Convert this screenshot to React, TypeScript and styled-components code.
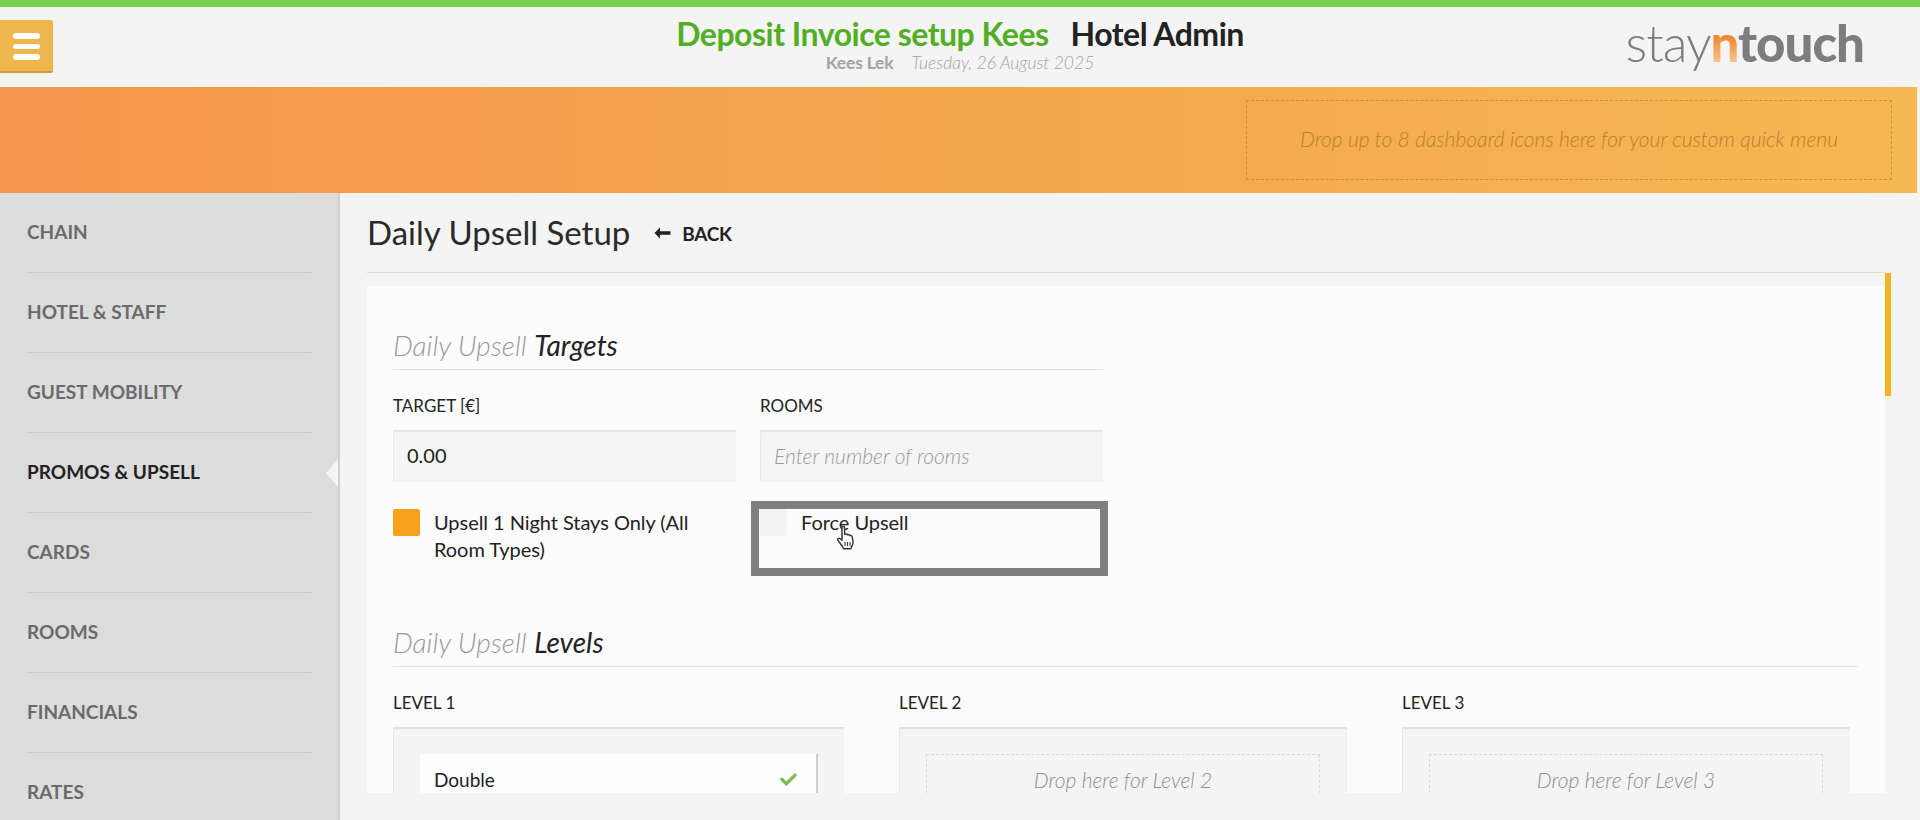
import { type FC } from 'react';
import styled, { createGlobalStyle } from 'styled-components';
import { FaCheck } from 'react-icons/fa';

const GlobalStyle = createGlobalStyle`
  html, body {
    margin: 0;
    padding: 0;
    height: 820px;
    overflow: hidden;
    background: #f4f4f4;
    font-family: Lato, "Open Sans", sans-serif;
    color: #222;
  }
  * { box-sizing: border-box; }
`;

const menuItems = ['CHAIN', 'HOTEL & STAFF', 'GUEST MOBILITY', 'PROMOS & UPSELL', 'CARDS', 'ROOMS', 'FINANCIALS', 'RATES'];

const App: FC = () => {
  return (
    <Page>
      <GlobalStyle />
      <Header>
        <MenuButton aria-label="menu">
          <MenuBar />
          <MenuBar />
          <MenuBar />
        </MenuButton>
        <HeaderCenter>
          <HeaderTitle>
            <GreenTitle>Deposit Invoice setup Kees</GreenTitle>
            <span>Hotel Admin</span>
          </HeaderTitle>
          <HeaderSub>
            <UserName>Kees Lek</UserName>
            <DateText>Tuesday, 26 August 2025</DateText>
          </HeaderSub>
        </HeaderCenter>
        <Logo>
          <LogoLight>stay</LogoLight>
          <LogoN>n</LogoN>
          <LogoBold>touch</LogoBold>
        </Logo>
      </Header>

      <Band>
        <DropArea>Drop up to 8 dashboard icons here for your custom quick menu</DropArea>
      </Band>

      <Body>
        <Sidebar>
          {menuItems.map((item) => (
            <MenuRow key={item} $active={item === 'PROMOS & UPSELL'}>
              {item}
            </MenuRow>
          ))}
        </Sidebar>

        <Main>
          <TitleRow>
            <PageTitle>Daily Upsell Setup</PageTitle>
            <BackLink>
              <svg width="17" height="12" viewBox="0 0 17 12">
                <path d="M6 0.500 L0.500 6 L6 11.500 L6 7.800 L16.500 7.800 L16.500 4.200 L6 4.200 Z" fill="#222" />
              </svg>
              BACK
            </BackLink>
          </TitleRow>

          <CardWrap>
            <ScrollThumb />
            <Card>
              <TargetsBlock>
                <SectionTitle>
                  <em>Daily Upsell</em> <b>Targets</b>
                </SectionTitle>
                <FieldGrid>
                  <div>
                    <FieldLabel>TARGET [€]</FieldLabel>
                    <FieldInput>0.00</FieldInput>
                  </div>
                  <div>
                    <FieldLabel>ROOMS</FieldLabel>
                    <FieldInput $placeholder>Enter number of rooms</FieldInput>
                  </div>
                  <CheckRow>
                    <CheckBox $checked />
                    <CheckLabel>Upsell 1 Night Stays Only (All Room Types)</CheckLabel>
                  </CheckRow>
                  <CheckRow>
                    <CheckBox />
                    <CheckLabel>Force Upsell</CheckLabel>
                    <Highlight />
                    <HandCursor width="22" height="26" viewBox="0 0 22 26">
                      <path
                        d="M7 2.5c0-1.6 2.6-1.6 2.6 0v7l1-.4c1-.3 1.8.1 2.1.8.9-.4 1.9-.1 2.2.7.9-.3 2 .1 2.2 1.1l1 5c.4 2-.5 3.6-1.6 5l-.6 2H8.500l-.8-2L3 15.500c-1-1.300.5-3 2-2l2 1.700z"
                        fill="#fff"
                        stroke="#3a3a3a"
                        strokeWidth="1.500"
                        strokeLinejoin="round"
                      />
                      <path d="M10 17v4M12.500 17v4M15 17v4" stroke="#3a3a3a" strokeWidth="1.100" />
                    </HandCursor>
                  </CheckRow>
                </FieldGrid>
              </TargetsBlock>

              <LevelsBlock>
                <SectionTitle>
                  <em>Daily Upsell</em> <b>Levels</b>
                </SectionTitle>
                <LevelGrid>
                  <div>
                    <FieldLabel>LEVEL 1</FieldLabel>
                    <LevelBox>
                      <RoomItem>
                        Double
                        <FaCheck size={17} color="#7cbb4f" />
                      </RoomItem>
                    </LevelBox>
                  </div>
                  <div>
                    <FieldLabel>LEVEL 2</FieldLabel>
                    <LevelBox>
                      <DropZone>Drop here for Level 2</DropZone>
                    </LevelBox>
                  </div>
                  <div>
                    <FieldLabel>LEVEL 3</FieldLabel>
                    <LevelBox>
                      <DropZone>Drop here for Level 3</DropZone>
                    </LevelBox>
                  </div>
                </LevelGrid>
              </LevelsBlock>
            </Card>
          </CardWrap>
        </Main>
      </Body>
    </Page>
  );
};

export default App;

const Page = styled.div`
  width: 1920px;
  height: 820px;
  display: flex;
  flex-direction: column;
  overflow: hidden;
  border-top: 7px solid #7ad150;
`;

const Header = styled.header`
  height: 80px;
  flex: none;
  display: flex;
  align-items: flex-start;
  position: relative;
  background: #f4f4f4;
`;

const MenuButton = styled.div`
  width: 53px;
  height: 53px;
  margin-top: 13px;
  padding: 13px 13px 0;
  display: flex;
  flex-direction: column;
  gap: 5px;
  background: #f0b64e;
  border-bottom: 2px solid #c99b47;
  border-radius: 0 2px 2px 0;
`;

const MenuBar = styled.span`
  display: block;
  width: 27px;
  height: 5.500px;
  border-radius: 3px;
  background: #fff;
`;

const HeaderCenter = styled.div`
  position: absolute;
  left: 660px;
  top: 9px;
  width: 600px;
  text-align: center;
`;

const HeaderTitle = styled.div`
  display: flex;
  justify-content: center;
  gap: 22px;
  font-size: 32px;
  line-height: 36px;
  font-weight: 700;
  letter-spacing: -0.5px;
  color: #222;
`;

const GreenTitle = styled.span`
  color: #52ae24;
`;

const HeaderSub = styled.div`
  margin-top: 1px;
  display: flex;
  justify-content: center;
  gap: 18px;
  font-size: 17.500px;
  line-height: 20px;
  color: #a3a3a3;
`;

const UserName = styled.span`
  font-weight: 700;
  letter-spacing: -0.2px;
`;

const DateText = styled.span`
  font-style: italic;
  font-weight: 300;
`;

const Logo = styled.div`
  margin-left: auto;
  margin-right: 56px;
  margin-top: 6px;
  font-size: 51px;
  line-height: 60px;
  color: #7d7d7d;
  letter-spacing: -1px;
`;

const LogoLight = styled.span`
  font-weight: 300;
`;

const LogoBold = styled.span`
  font-weight: 900;
`;

const LogoN = styled.span`
  font-weight: 900;
  background: linear-gradient(180deg, #ee8a2e 40%, #fbd9b4 100%);
  -webkit-background-clip: text;
  background-clip: text;
  color: transparent;
`;

const Band = styled.div`
  height: 106px;
  flex: none;
  padding: 13px 25px 13px 1246px;
  margin-right: 3px;
  background: linear-gradient(90deg, #f4964c 0%, #f5b751 100%);
`;

const DropArea = styled.div`
  height: 80px;
  display: flex;
  align-items: center;
  justify-content: center;
  padding-bottom: 3px;
  border: 1px dashed #c98f3f;
  font-size: 21px;
  font-style: italic;
  font-weight: 300;
  color: #b9802f;
`;

const Body = styled.div`
  flex: 1;
  min-height: 0;
  display: flex;
`;

const Sidebar = styled.nav`
  width: 340px;
  flex: none;
  padding: 0 27px 0 27px;
  background: #dcdcdc;
  border-right: 2px solid #d0d0d0;
`;

const MenuRow = styled.div<{ $active?: boolean }>`
  height: 80px;
  display: flex;
  align-items: center;
  position: relative;
  padding-bottom: 3px;
  font-size: 19px;
  font-weight: 700;
  color: ${(p) => (p.$active ? '#222' : '#6b6b6b')};
  border-bottom: 1px solid #c8c8c8;

  &:last-child {
    padding-bottom: 4px;
    border-bottom: none;
  }

  ${(p) =>
    p.$active &&
    `
    &::after {
      content: '';
      position: absolute;
      right: -27px;
      top: 26px;
      border: 14px solid transparent;
      border-right: 12px solid #f4f4f4;
      border-left: none;
    }
  `}
`;

const Main = styled.main`
  flex: 1;
  min-width: 0;
  display: flex;
  flex-direction: column;
  padding: 0 29px 27px 27px;
`;

const TitleRow = styled.div`
  height: 80px;
  flex: none;
  display: flex;
  align-items: center;
  gap: 24px;
  padding: 0 0 2px 0;
  border-bottom: 1px solid #dcdcdc;
  margin-right: 6px;
`;

const PageTitle = styled.h1`
  margin: 0;
  font-size: 33px;
  font-weight: 400;
  color: #2a2a2a;
`;

const BackLink = styled.div`
  display: flex;
  align-items: center;
  gap: 11px;
  margin-top: 3px;
  font-size: 19px;
  font-weight: 700;
  color: #222;
  letter-spacing: -0.3px;
`;

const CardWrap = styled.div`
  flex: 1;
  min-height: 0;
  position: relative;
  margin-top: 13px;
  padding-right: 6px;
  display: flex;
`;

const Card = styled.section`
  flex: 1;
  min-width: 0;
  padding: 0 27px 0 26px;
  overflow: hidden;
  background: #fcfcfc;
`;

const ScrollThumb = styled.div`
  position: absolute;
  top: -13px;
  right: 0;
  width: 6px;
  height: 123px;
  background: #f5b322;
`;

const TargetsBlock = styled.div`
  width: 710px;
  padding-top: 41px;
`;

const LevelsBlock = styled.div`
  padding-top: 61px;
`;

const SectionTitle = styled.h2`
  margin: 0;
  height: 43px;
  padding-top: 1px;
  font-size: 28px;
  line-height: 34px;
  font-weight: 300;
  border-bottom: 1px solid #e4e4e4;

  em {
    font-style: italic;
    color: #9a9a9a;
  }

  b {
    font-style: italic;
    font-weight: 400;
    color: #222;
  }
`;

const FieldGrid = styled.div`
  display: grid;
  grid-template-columns: 343px 343px;
  column-gap: 24px;
  row-gap: 27px;
  padding-top: 24px;
`;

const FieldLabel = styled.div`
  font-size: 17px;
  line-height: 24px;
  margin-bottom: 12px;
  color: #222;
`;

const FieldInput = styled.div<{ $placeholder?: boolean }>`
  height: 52px;
  display: flex;
  align-items: center;
  padding: 0 0 2px 14px;
  background: #f5f5f5;
  box-shadow: inset 0 2px 1px #e6e6e6, inset 1px 0 0 #ececec;
  font-size: ${(p) => (p.$placeholder ? '21px' : '20px')};
  font-style: ${(p) => (p.$placeholder ? 'italic' : 'normal')};
  font-weight: ${(p) => (p.$placeholder ? 300 : 400)};
  color: ${(p) => (p.$placeholder ? '#9a9a9a' : '#222')};
`;

const CheckRow = styled.div`
  display: flex;
  gap: 14px;
  position: relative;
  min-height: 54px;
`;

const CheckBox = styled.span<{ $checked?: boolean }>`
  width: 27px;
  height: 27px;
  flex: none;
  border-radius: 2px;
  background: ${(p) => (p.$checked ? '#f6a21c' : '#f4f4f4')};
`;

const CheckLabel = styled.div`
  font-size: 20px;
  line-height: 27px;
  letter-spacing: -0.05px;
  color: #222;
`;

const Highlight = styled.div`
  position: absolute;
  top: -8px;
  left: -9px;
  width: 357px;
  height: 75px;
  border: 8px solid #7f7f7f;
  pointer-events: none;
`;

const HandCursor = styled.svg`
  position: absolute;
  left: 75px;
  top: 16px;
`;

const LevelGrid = styled.div`
  display: grid;
  grid-template-columns: 451px 448px 448px;
  column-gap: 55px;
  padding-top: 24px;
`;

const LevelBox = styled.div`
  height: 100px;
  padding: 27px;
  background: #f4f4f4;
  box-shadow: inset 0 2px 1px #e2e2e2, inset 1px 0 0 #e8e8e8;
`;

const RoomItem = styled.div`
  height: 60px;
  display: flex;
  align-items: center;
  justify-content: space-between;
  padding: 0 19px 10px 14px;
  margin-right: -1px;
  background: #fdfdfd;
  border-right: 2px solid #cfcfcf;
  font-size: 19px;
  color: #222;
`;

const DropZone = styled.div`
  height: 80px;
  padding-top: 10px;
  text-align: center;
  line-height: 30px;
  border: 1px dashed #d8d8d8;
  font-size: 21px;
  font-style: italic;
  font-weight: 300;
  color: #8f8f8f;
`;
